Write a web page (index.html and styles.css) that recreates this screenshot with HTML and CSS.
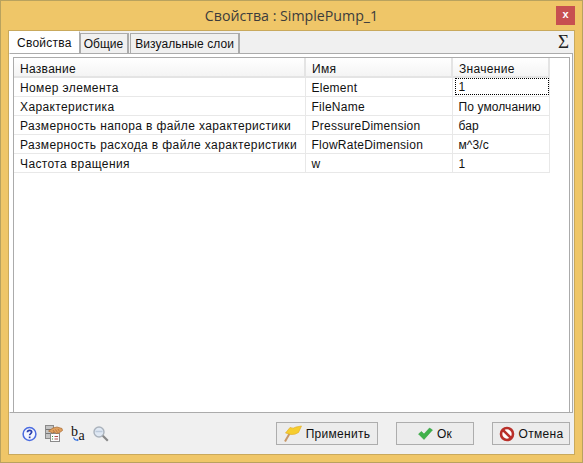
FILE: index.html

```html
<!DOCTYPE html>
<html lang="ru">
<head>
    <meta charset="UTF-8">
    <title>Свойства : SimplePump_1</title>
    <link rel="stylesheet" href="styles.css">
</head>
<body>

<div class="window">
    <div class="titlebar">
        <div class="title">Свойства : SimplePump_1</div>
        <div class="close">x</div>
    </div>

    <div class="client">
        <div class="tabstrip">
            <div class="tab active">Свойства</div>
            <div class="tab">Общие</div>
            <div class="tab tab-layers">Визуальные слои</div>
            <div class="sigma">Σ</div>
        </div>

        <div class="tabpanel">
            <div class="gridbox">
                <table class="grid">
                    <colgroup>
                        <col class="col-name">
                        <col class="col-id">
                        <col class="col-value">
                    </colgroup>
                    <thead>
                        <tr>
                            <th>Название</th>
                            <th>Имя</th>
                            <th>Значение</th>
                        </tr>
                    </thead>
                    <tbody>
                        <tr>
                            <td>Номер элемента</td>
                            <td>Element</td>
                            <td class="focus-cell"><span class="focused">1</span></td>
                        </tr>
                        <tr>
                            <td>Характеристика</td>
                            <td>FileName</td>
                            <td>По умолчанию</td>
                        </tr>
                        <tr>
                            <td>Размерность напора в файле характеристики</td>
                            <td>PressureDimension</td>
                            <td>бар</td>
                        </tr>
                        <tr>
                            <td>Размерность расхода в файле характеристики</td>
                            <td>FlowRateDimension</td>
                            <td>м^3/с</td>
                        </tr>
                        <tr>
                            <td>Частота вращения</td>
                            <td>w</td>
                            <td>1</td>
                        </tr>
                    </tbody>
                </table>
            </div>
        </div>

        <div class="footer">
            <div class="tools">
                <!-- help -->
                <svg class="icon" width="15" height="16" viewBox="0 0 15 16">
                    <circle cx="7.500" cy="8" r="6.400" fill="#f4f6fe" stroke="#4a6be0" stroke-width="1.500"/>
                    <path d="M5.400 6.300c.1-1.300 1-2 2.200-2s2.100.7 2.100 1.800c0 1.500-2.100 1.500-2.100 3.200" fill="none" stroke="#2a3fae" stroke-width="1.700"/>
                    <rect x="6.800" y="10.500" width="1.700" height="1.700" fill="#2a3fae"/>
                </svg>
                <!-- table with hand -->
                <svg class="icon" width="18" height="17" viewBox="0 0 18 17">
                    <rect x="0.500" y="0.500" width="8" height="13" fill="#c4c4c4" stroke="#8a8a8a"/>
                    <path d="M1 4.500h7M1 8.500h7" stroke="#777"/>
                    <rect x="5.500" y="8.500" width="9" height="8" fill="#fbfbfb" stroke="#8a8a8a"/>
                    <path d="M7 11.500h1M7 14h1" stroke="#3a9a3a"/>
                    <path d="M9.500 11.500h3.500M9.500 14h3.500" stroke="#b05050"/>
                    <path d="M3.500 6l4.500-3 4-1 5 1.500.5 2-3.500 2.500-3 .5-1.500-1.500-2 1z" fill="#e0a060" stroke="#a86a30" stroke-width="0.700"/>
                    <path d="M8 5l2 3M10.500 4.500l2 3M13 4l1.500 2.500" stroke="#a86a30" stroke-width="0.700"/>
                </svg>
                <!-- rename b to a -->
                <svg class="icon" width="14" height="22" viewBox="0 0 14 22">
                    <path d="M2.500 14.500q1 3 3.500 2.500" fill="none" stroke="#2f6fe0" stroke-width="1.100"/>
                    <path d="M8 17l-2-1.300v2.600z" fill="#2f6fe0"/>
                    <text class="icon-b" x="0" y="13">b</text>
                    <text class="icon-a" x="7.500" y="17">a</text>
                </svg>
                <!-- search -->
                <svg class="icon" width="16" height="16" viewBox="0 0 16 16">
                    <circle cx="6" cy="6" r="5" fill="#dfe8f3" stroke="#aab2bc" stroke-width="1.400"/>
                    <path d="M2.500 5.500h7" stroke="#bccadb" stroke-width="1.500"/>
                    <path d="M9.800 9.800l5 5" stroke="#888" stroke-width="2.200"/>
                </svg>
            </div>

            <div class="buttons">
                <div class="btn btn-apply">
                    <svg width="18" height="17" viewBox="0 0 18 17">
                        <path d="M1 16.500L7 6" stroke="#c89868" stroke-width="2"/>
                        <path d="M6 2.500q3.500 1.500 6-.5l5.500-1-3 6.500q-3.500 2.500-7.500 2l-5.500-1.500z" fill="#f6cd2e" stroke="#e0aa1c" stroke-width="0.600"/>
                    </svg>
                    <span>Применить</span>
                </div>
                <div class="btn btn-ok">
                    <svg width="15" height="13" viewBox="0 0 15 13">
                        <path d="M0.500 7l3-2.500 2.500 2.500 5.500-6 3 2-8.500 9.500z" fill="#3fb24a" stroke="#2d9a3a" stroke-width="0.500"/>
                    </svg>
                    <span>Ок</span>
                </div>
                <div class="btn btn-cancel">
                    <svg width="16" height="16" viewBox="0 0 16 16">
                        <circle cx="8" cy="8" r="6" fill="#fff" stroke="#b9302a" stroke-width="2.600"/>
                        <path d="M3.800 3.800l8.400 8.400" stroke="#b9302a" stroke-width="2.600"/>
                    </svg>
                    <span>Отмена</span>
                </div>
            </div>
        </div>
    </div>
</div>

</body>
</html>
```

FILE: styles.css

```css
html, body { margin: 0; padding: 0; }
body { font-family: "Liberation Sans", Arial, sans-serif; font-size: 12px; color: #111; }

.window { box-sizing: border-box; width: 583px; height: 463px; background: #efc668; border: 1px solid #b9a25e; display: flex; flex-direction: column; padding: 0 7px 7px 7px; }

.titlebar { height: 29px; flex: none; display: flex; align-items: flex-start; position: relative; }
.title { flex: 1; text-align: center; font-family: "Open Sans", sans-serif; font-size: 14.2px; color: #3c3c3c; padding-top: 5px; }
.close { position: absolute; right: 0; top: 5px; width: 19px; height: 19px; background: #c75050; color: #fff; font-size: 11px; font-weight: bold; text-align: center; line-height: 17px; }

.client { flex: 1; min-height: 0; background: #f0f0f0; border: 1px solid #c9a95c; display: flex; flex-direction: column; }

.tabstrip { height: 22px; flex: none; display: flex; align-items: flex-end; position: relative; }
.tab { box-sizing: border-box; height: 20px; border: 1px solid #ababab; border-bottom: 0; border-right-width: 2px; line-height: 20px; padding: 0 4px 0 3px; background: #f0f0f0; }
.tab-layers { margin-left: 1px; padding: 0 4px; letter-spacing: .08px; }
.tab.active { height: 22px; background: #fff; border-color: #fff #ababab #fff #fff; border-right-width: 1px; padding: 0 7px; line-height: 22px; letter-spacing: .25px; }
.sigma { position: absolute; right: 5px; top: 0; font-family: "Liberation Serif", serif; font-size: 19px; line-height: 22px; color: #222; }

.tabpanel { height: 360px; flex: none; box-sizing: border-box; background: #fff; border: 1px solid #ababab; border-left-color: #fff; margin-right: 1px; padding: 3px 2px 0 3px; }
.gridbox { box-sizing: border-box; height: 356px; border: 1px solid #ababab; background: #fff; }

.grid { border-collapse: collapse; table-layout: fixed; width: 535px; }
.col-name { width: 291px; }
.col-id { width: 147px; }
.col-value { width: 97px; }
.grid th, .grid td { box-sizing: border-box; height: 19px; padding: 2px 0 0 6px; font-weight: normal; text-align: left; border-right: 1px solid #e8e8e8; border-bottom: 1px solid #e8e8e8; white-space: nowrap; overflow: hidden; }
.grid th { padding-top: 3px; letter-spacing: .3px; background: linear-gradient(#fff, #f4f4f4); border-bottom: 2px solid #e4e4e4; border-right: 2px solid #e4e4e4; }
.grid td:nth-child(1) { letter-spacing: .38px; }
.grid td:nth-child(2) { letter-spacing: .25px; }
.grid td:nth-child(3) { letter-spacing: .1px; }
.grid td.focus-cell { padding-top: 0; }
.focused { display: block; box-sizing: border-box; height: 17px; margin-left: -4px; padding-left: 3px; line-height: 16px; border: 1px dotted #000; }

.footer { flex: 1; display: flex; align-items: center; justify-content: space-between; padding: 0 4px 0 13px; }
.tools { display: flex; align-items: center; gap: 8px; }
.icon { display: block; }
.icon-b, .icon-a { font-family: "Liberation Serif", serif; font-size: 14px; fill: #111; }

.buttons { display: flex; gap: 18px; }
.btn { box-sizing: border-box; height: 23px; border: 1px solid #adadad; background: #ececec; display: flex; align-items: center; justify-content: center; gap: 4px; letter-spacing: .3px; }
.btn-apply { width: 102px; }
.btn-ok { width: 78px; }
.btn-cancel { width: 78px; }
```
